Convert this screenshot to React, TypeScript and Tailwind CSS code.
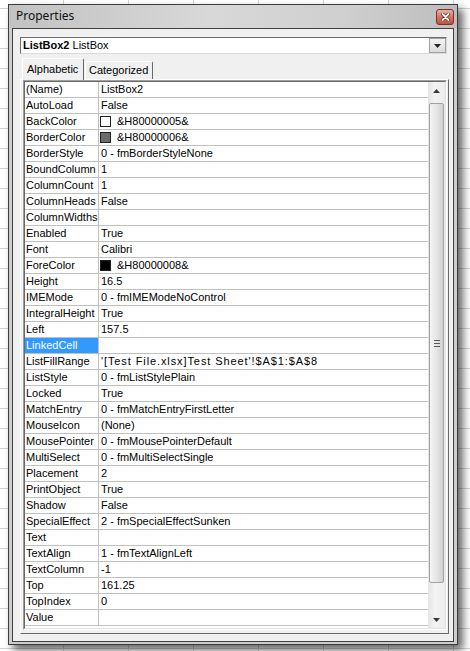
import React from "react";

type Row = { name: string; value: string; swatch?: string; selected?: boolean; wide?: boolean };

const rows: Row[] = [
  { name: "(Name)", value: "ListBox2" },
  { name: "AutoLoad", value: "False" },
  { name: "BackColor", value: "&H80000005&", swatch: "#ffffff" },
  { name: "BorderColor", value: "&H80000006&", swatch: "#6b6b6b" },
  { name: "BorderStyle", value: "0 - fmBorderStyleNone" },
  { name: "BoundColumn", value: "1" },
  { name: "ColumnCount", value: "1" },
  { name: "ColumnHeads", value: "False" },
  { name: "ColumnWidths", value: "" },
  { name: "Enabled", value: "True" },
  { name: "Font", value: "Calibri" },
  { name: "ForeColor", value: "&H80000008&", swatch: "#000000" },
  { name: "Height", value: "16.5" },
  { name: "IMEMode", value: "0 - fmIMEModeNoControl" },
  { name: "IntegralHeight", value: "True" },
  { name: "Left", value: "157.5" },
  { name: "LinkedCell", value: "", selected: true },
  { name: "ListFillRange", value: "'[Test File.xlsx]Test Sheet'!$A$1:$A$8", wide: true },
  { name: "ListStyle", value: "0 - fmListStylePlain" },
  { name: "Locked", value: "True" },
  { name: "MatchEntry", value: "0 - fmMatchEntryFirstLetter" },
  { name: "MouseIcon", value: "(None)" },
  { name: "MousePointer", value: "0 - fmMousePointerDefault" },
  { name: "MultiSelect", value: "0 - fmMultiSelectSingle" },
  { name: "Placement", value: "2" },
  { name: "PrintObject", value: "True" },
  { name: "Shadow", value: "False" },
  { name: "SpecialEffect", value: "2 - fmSpecialEffectSunken" },
  { name: "Text", value: "" },
  { name: "TextAlign", value: "1 - fmTextAlignLeft" },
  { name: "TextColumn", value: "-1" },
  { name: "Top", value: "161.25" },
  { name: "TopIndex", value: "0" },
  { name: "Value", value: "" },
];

function Tri({ up, color = "#222" }: { up?: boolean; color?: string }) {
  return (
    <svg width="7" height="4" viewBox="0 0 7 4">
      <path d={up ? "M3.5 0 L7 4 L0 4 Z" : "M0 0 L7 0 L3.5 4 Z"} fill={color} />
    </svg>
  );
}

export default function App() {
  return (
    <div className="w-[470px] h-[651px] overflow-hidden bg-white [background-image:linear-gradient(to_right,#d2d2d2_1px,transparent_1px),linear-gradient(to_bottom,#d2d2d2_1px,transparent_1px)] [background-size:65px_20px] [background-position:63px_8px] pt-[4px] pl-[8px] font-['Liberation_Sans',Arial,sans-serif] text-black">
      <div className="w-[450px] h-[641px] border border-[#3c3c3c] bg-[#cdcdcd] shadow-[5px_5px_8px_rgba(0,0,0,0.6)] flex flex-col">
        {/* title bar */}
        <div className="h-[23px] flex items-start justify-between pl-[7px] pr-[3px] bg-[linear-gradient(to_right,#c2c2c2,#d8d8d8_45%,#cfcfcf_75%,#bdbdbd)]">
          <span className="mt-[3px] text-[12px] leading-[16px] font-['Noto_Sans',sans-serif] text-[#111]">
            Properties
          </span>
          <div className="mt-[4px] w-[18px] h-[16px] rounded-[3px] border border-[#7d3326] bg-[linear-gradient(to_bottom,#eab0a2,#d87a66_45%,#c5503c)] flex items-center justify-center">
            <svg width="9" height="8" viewBox="0 0 9 8">
              <path d="M1.5 1 L7.5 7 M7.5 1 L1.5 7" stroke="#5a1f16" strokeWidth="3.2" strokeLinecap="round" />
              <path d="M1.5 1 L7.5 7 M7.5 1 L1.5 7" stroke="#ffffff" strokeWidth="1.8" strokeLinecap="round" />
            </svg>
          </div>
        </div>

        {/* content */}
        <div className="mx-[3px] mb-[2px] flex-1 border border-[#404040] bg-[#f0f0f0] flex flex-col">
          {/* combo */}
          <div className="mt-[8px] ml-[7px] w-[427px] h-[17px] flex items-center bg-white border border-t-[#6e6e6e] border-l-[#6e6e6e] border-r-[#dadada] border-b-[#dadada]">
            <span className="pl-[2px] text-[11px] leading-[15px]">
              <span className="font-bold">ListBox2</span> ListBox
            </span>
            <div className="ml-auto w-[17px] h-[15px] bg-[linear-gradient(to_bottom,#f2f2f2,#dcdcdc)] border border-[#a0a0a0] flex items-center justify-center">
              <Tri />
            </div>
          </div>

          {/* tabs */}
          <div className="mt-[4px] ml-[9px] h-[22px] -mb-px relative z-10 flex items-end">
            <div className="w-[62px] h-[22px] bg-[#f0f0f0] border-t border-l border-r border-t-white border-l-white border-r-[#696969] rounded-t-[2px] flex items-center pl-[4px] text-[11px]">
              Alphabetic
            </div>
            <div className="ml-[1px] mb-px w-[68px] h-[18px] bg-[#f0f0f0] border-t border-l border-r border-t-white border-l-white border-r-[#696969] rounded-t-[2px] flex items-center pl-[3px] text-[11px]">
              Categorized
            </div>
          </div>

          {/* tab page */}
          <div className="ml-[7px] mr-[4px] border border-t-white border-l-white border-r-[#696969] border-b-[#696969] pl-[2px] pr-[1px] pb-[3px]">
            <div className="h-[550px] border border-t-[#a0a0a0] border-l-[#a0a0a0] border-r-white border-b-white">
              <div className="h-full border border-t-[#696969] border-l-[#696969] border-r-[#e3e3e3] border-b-[#e3e3e3] bg-white flex">
                {/* rows */}
                <div className="w-[403px] flex flex-col">
                  {rows.map((r) => (
                    <div key={r.name} className="h-[16px] flex border-b border-[#c0c0c0] text-[11px] leading-[15px]">
                      <div
                        className={
                          r.selected
                            ? "w-[74px] border-r border-[#c0c0c0] pl-[1px] bg-[#3399ff] text-white"
                            : "w-[74px] border-r border-[#c0c0c0] pl-[1px]"
                        }
                      >
                        {r.name}
                      </div>
                      {r.swatch ? (
                        <div className="flex-1 flex items-center pl-[1px]">
                          <span
                            className="w-[11px] h-[11px] border border-[#222]"
                            style={{ backgroundColor: r.swatch }}
                          />
                          <span className="ml-[6px]">{r.value}</span>
                        </div>
                      ) : (
                        <div
                          className={
                            r.wide
                              ? "flex-1 pl-[2px] whitespace-nowrap tracking-[0.9px]"
                              : "flex-1 pl-[2px] whitespace-nowrap"
                          }
                        >
                          {r.value}
                        </div>
                      )}
                    </div>
                  ))}
                </div>
                {/* scrollbar */}
                <div className="w-[17px] flex flex-col bg-[linear-gradient(to_right,#e4e4e4,#f3f3f3_40%,#ececec)]">
                  <div className="h-[17px] flex items-center justify-center">
                    <Tri up color="#3a3a3a" />
                  </div>
                  <div className="flex-1 flex flex-col">
                    <div className="mt-[4px] mx-px h-[480px] rounded-[2px] border border-[#a3a3a3] bg-[linear-gradient(to_right,#f5f5f5,#e6e6e6_50%,#d0d0d0)] flex flex-col items-center justify-center gap-[2px]">
                      <div className="w-[6px] h-px bg-[#5a5a5a]" />
                      <div className="w-[6px] h-px bg-[#5a5a5a]" />
                      <div className="w-[6px] h-px bg-[#5a5a5a]" />
                    </div>
                  </div>
                  <div className="h-[17px] flex items-center justify-center">
                    <Tri color="#3a3a3a" />
                  </div>
                </div>
              </div>
            </div>
          </div>
        </div>
      </div>
    </div>
  );
}
